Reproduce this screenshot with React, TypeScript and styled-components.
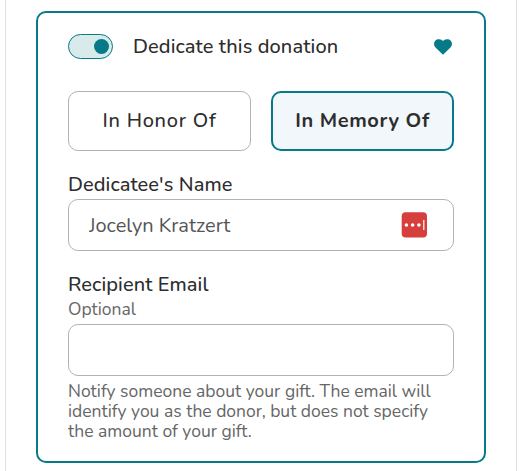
import React, { useState } from "react";
import styled, { createGlobalStyle } from "styled-components";

const teal = "#067a87";

const GlobalStyle = createGlobalStyle`
  *, *::before, *::after { box-sizing: border-box; }
  body {
    margin: 0;
    background: #fff;
    color: #2d2d2d;
    font-family: Nunito, Lato, "Open Sans", sans-serif;
    font-size: 20px;
  }
`;

const Page = styled.main`
  width: 512px;
  height: 100vh;
  margin-left: 5px;
  padding: 11px 30px 0;
  border: solid #e0e0e0;
  border-width: 0 1px;
  overflow: hidden;
`;

const Card = styled.section`
  width: 450px;
  height: 452px;
  padding: 21px 30px 0;
  border: 2px solid ${teal};
  border-radius: 10px;
`;

const Header = styled.header`
  display: flex;
  align-items: center;
  height: 25px;
  margin-bottom: 32px;
`;

const Toggle = styled.button<{ $on: boolean }>`
  display: flex;
  align-items: center;
  justify-content: ${(p) => (p.$on ? "flex-end" : "flex-start")};
  width: 45px;
  height: 25px;
  padding: 0 3px;
  border: 1px solid ${teal};
  border-radius: 13px;
  background: #d9eaeb;
`;

const Thumb = styled.span`
  width: 15px;
  height: 15px;
  border-radius: 50%;
  background: ${teal};
`;

const Title = styled.span`
  flex: 1;
  margin-left: 20px;
  line-height: 25px;
  font-weight: 500;
  letter-spacing: 0.1px;
  white-space: nowrap;
`;

const Heart = styled.svg`
  width: 18px;
  height: 16px;
  margin-right: 2px;
  fill: ${teal};
`;

const Choices = styled.div`
  display: grid;
  grid-template-columns: 1fr 1fr;
  gap: 20px;
  margin-bottom: 20px;
`;

const Choice = styled.button<{ $selected: boolean }>`
  height: 60px;
  padding: 0 0 2px;
  border: ${(p) => (p.$selected ? `2px solid ${teal}` : "1px solid #b3b3b3")};
  border-radius: 10px;
  background: ${(p) => (p.$selected ? "#f1f7fa" : "#fff")};
  color: inherit;
  font: inherit;
  font-weight: ${(p) => (p.$selected ? 700 : 500)};
  letter-spacing: ${(p) => (p.$selected ? "0.6px" : "0.75px")};
  white-space: nowrap;
`;

const Label = styled.label`
  display: block;
  line-height: 28px;
  font-weight: 500;
  letter-spacing: 0.08px;
`;

const Hint = styled.span`
  display: block;
  height: 25px;
  color: #666;
  font-size: 17.5px;
  line-height: 20px;
`;

const Field = styled.div`
  display: flex;
  align-items: center;
  height: 52px;
  padding: 0 26px 0 20px;
  border: 1px solid #b3b3b3;
  border-radius: 10px;
`;

const Input = styled.input`
  flex: 1;
  min-width: 0;
  padding: 0;
  border: 0;
  outline: 0;
  background: transparent;
  color: #555;
  font: inherit;
`;

const PasswordIcon = styled.svg`
  width: 26px;
  height: 26px;
  margin-bottom: 1px;
`;

const Group = styled.div`
  & + & { margin-top: 20px; }
`;

const Help = styled.p`
  margin: 5px 0 0;
  color: #666;
  font-size: 17.5px;
  line-height: 20px;
`;

export default function App() {
  const [enabled, setEnabled] = useState(true);
  const [kind, setKind] = useState("memory");
  const [name, setName] = useState("Jocelyn Kratzert");
  const [email, setEmail] = useState("");

  return (
    <>
      <GlobalStyle />
      <Page>
        <Card>
          <Header>
            <Toggle
              $on={enabled}
              role="switch"
              aria-checked={enabled}
              aria-label="Dedicate this donation"
              onClick={() => setEnabled(!enabled)}
            >
              <Thumb />
            </Toggle>
            <Title>Dedicate this donation</Title>
            <Heart viewBox="0 0 18 16" aria-hidden="true">
              <path d="M9 15.7 1.5 8.4C-.4 6.5-.4 3.4 1.2 1.7 3-.1 6.2-.2 8.1 1.2L9 2l.9-.8c1.9-1.4 5.1-1.3 6.9.5 1.6 1.7 1.6 4.8-.3 6.7Z" />
            </Heart>
          </Header>
          <Choices>
            <Choice $selected={kind === "honor"} onClick={() => setKind("honor")}>
              In Honor Of
            </Choice>
            <Choice $selected={kind === "memory"} onClick={() => setKind("memory")}>
              In Memory Of
            </Choice>
          </Choices>
          <Group>
            <Label htmlFor="name">Dedicatee's Name</Label>
            <Field>
              <Input id="name" value={name} onChange={(e) => setName(e.target.value)} />
              <PasswordIcon viewBox="0 0 26 26" aria-hidden="true">
                <rect x="0.7" y="0.3" width="25.3" height="25.2" rx="4" fill="#d63f3b" />
                <g fill="#fff">
                  <circle cx="5.4" cy="13" r="1.8" />
                  <circle cx="11.6" cy="13" r="1.8" />
                  <circle cx="17.9" cy="13" r="1.8" />
                  <rect x="22.2" y="8" width="1.2" height="10" />
                </g>
              </PasswordIcon>
            </Field>
          </Group>
          <Group>
            <Label htmlFor="email">Recipient Email</Label>
            <Hint>Optional</Hint>
            <Field>
              <Input id="email" value={email} onChange={(e) => setEmail(e.target.value)} />
            </Field>
            <Help>
              Notify someone about your gift. The email will identify you as the
              donor, but does not specify the amount of your gift.
            </Help>
          </Group>
        </Card>
      </Page>
    </>
  );
}
